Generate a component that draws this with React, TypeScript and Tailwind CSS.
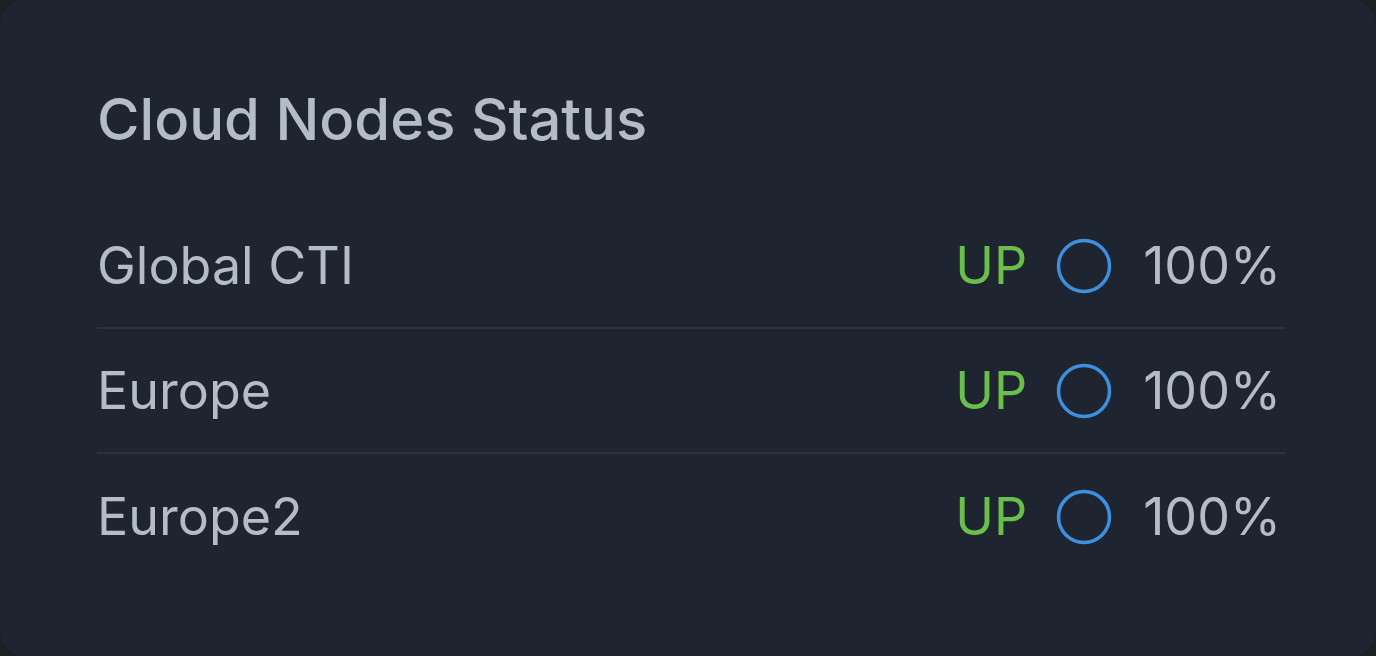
import React from "react";

type Node = { name: string; status: string; uptime: string };

const nodes: Node[] = [
  { name: "Global CTI", status: "UP", uptime: "100%" },
  { name: "Europe", status: "UP", uptime: "100%" },
  { name: "Europe2", status: "UP", uptime: "100%" },
];

function Ring() {
  return (
    <svg width="56" height="56" viewBox="0 0 56 56" className="shrink-0">
      <circle cx="28" cy="28" r="25.5" fill="none" stroke="#3d8fe0" strokeWidth="3.5" />
    </svg>
  );
}

export default function App() {
  return (
    <div
      className="min-h-screen bg-[#1c2125]"
      style={{ fontFamily: "Inter, 'Noto Sans', sans-serif" }}
    >
      <div className="h-[656px] rounded-3xl bg-[#1f2530] pl-[97px] pr-[91px] pt-[87px]">
        <h1 className="text-[58px] leading-[64px] font-medium text-[#b4bcc8]">
          Cloud Nodes Status
        </h1>

        <div className="mt-[53px]">
          {nodes.map((n, i) => (
            <div
              key={n.name}
              className={
                "flex items-center justify-between h-[125px] " +
                (i < nodes.length - 1 ? "border-b-2 border-[#2b333e]" : "")
              }
            >
              <span className="text-[52px] text-[#b4bcc8]">{n.name}</span>
              <div className="flex items-center pr-[4px]">
                <span className="text-[52px] text-[#6abf4b]">{n.status}</span>
                <span className="ml-[29px] mr-[31px]">
                  <Ring />
                </span>
                <span className="text-[52px] text-[#b4bcc8]">{n.uptime}</span>
              </div>
            </div>
          ))}
        </div>
      </div>
    </div>
  );
}
